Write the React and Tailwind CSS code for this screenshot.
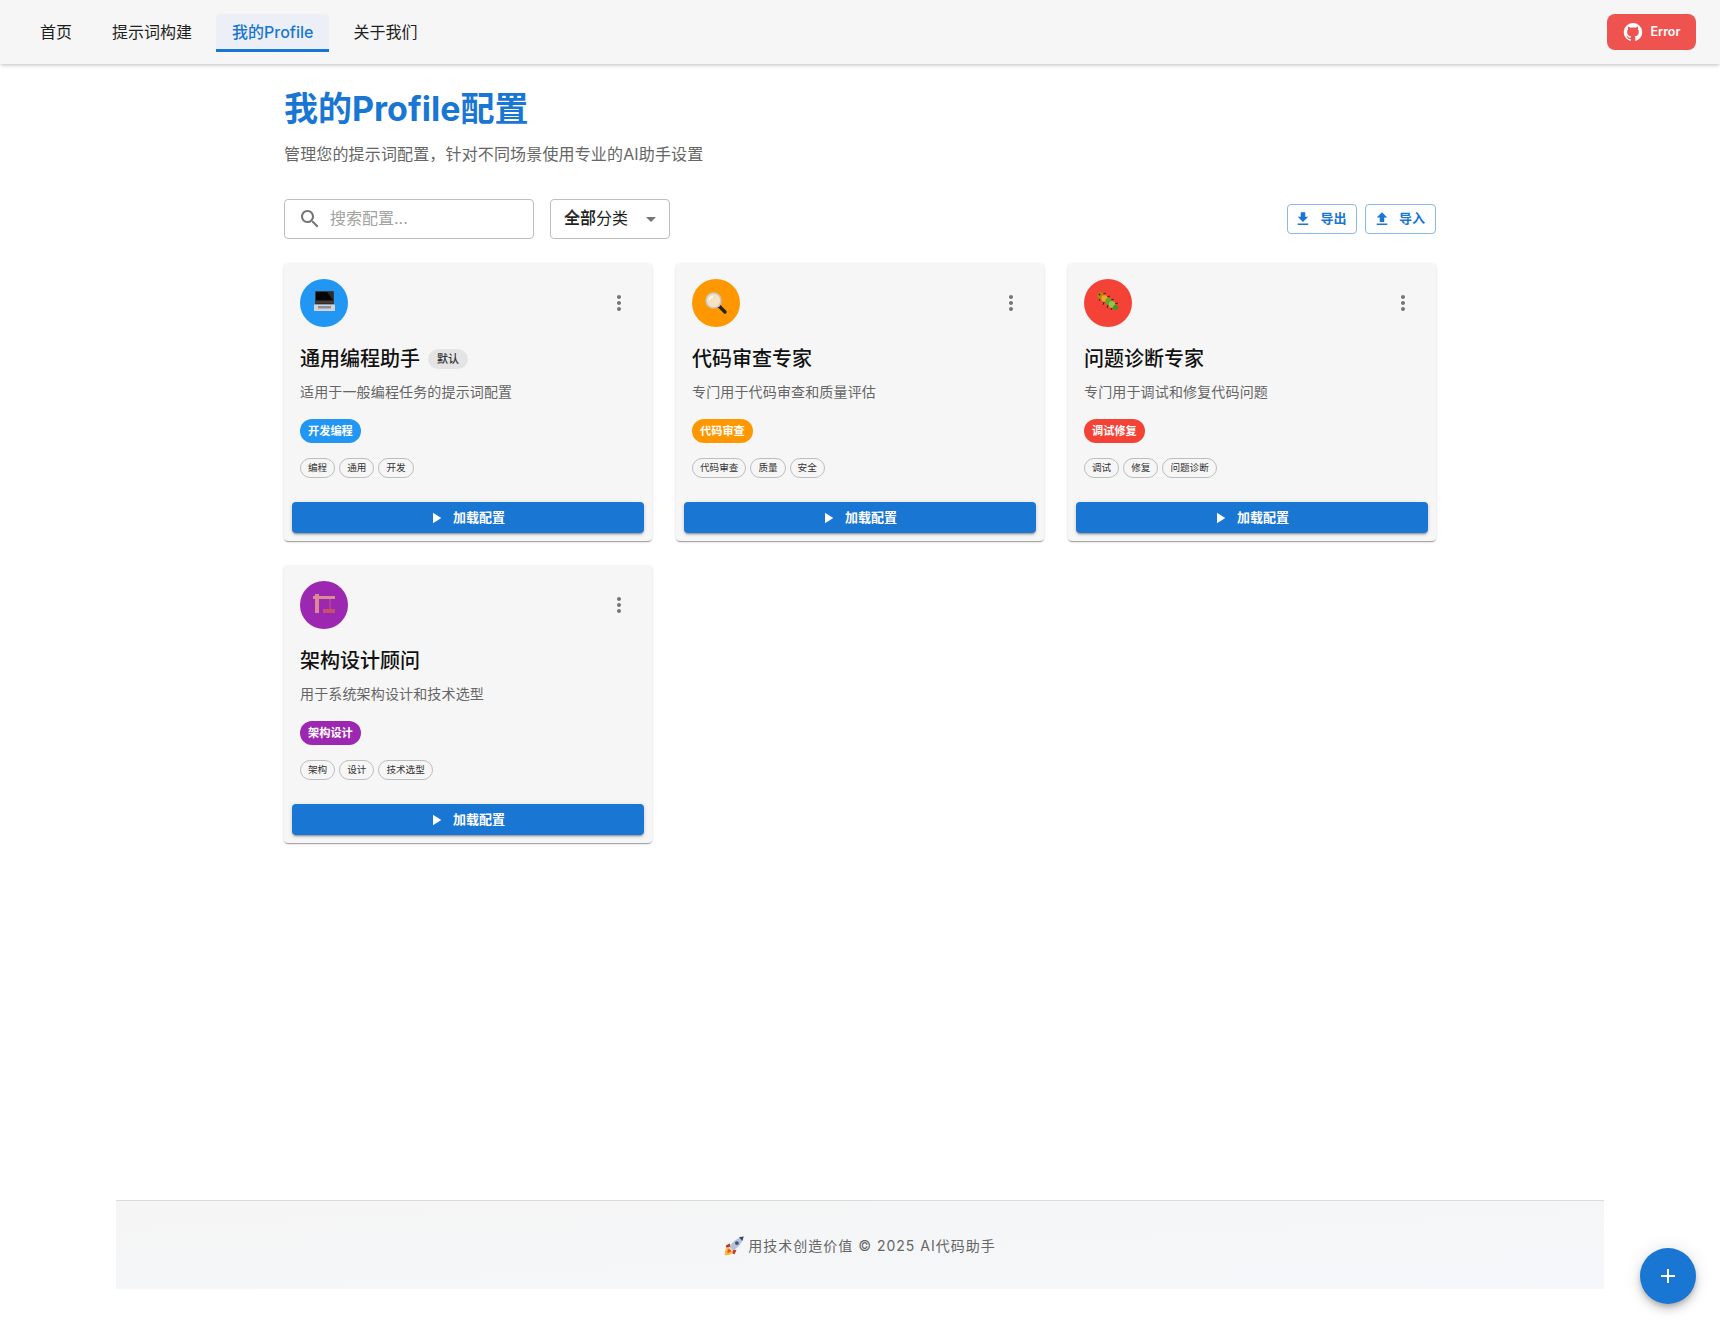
import React from 'react';

const navItems = ['首页', '提示词构建', '我的Profile', '关于我们'];

const profiles = [
  {
    title: '通用编程助手',
    desc: '适用于一般编程任务的提示词配置',
    category: '开发编程',
    tags: ['编程', '通用', '开发'],
    avatarClass: 'bg-[#2196f3]',
    chipClass: 'bg-[#2196f3]',
    emoji: 'laptop',
    isDefault: true,
  },
  {
    title: '代码审查专家',
    desc: '专门用于代码审查和质量评估',
    category: '代码审查',
    tags: ['代码审查', '质量', '安全'],
    avatarClass: 'bg-[#ff9800]',
    chipClass: 'bg-[#ff9800]',
    emoji: 'search',
  },
  {
    title: '问题诊断专家',
    desc: '专门用于调试和修复代码问题',
    category: '调试修复',
    tags: ['调试', '修复', '问题诊断'],
    avatarClass: 'bg-[#f44336]',
    chipClass: 'bg-[#f44336]',
    emoji: 'bug',
  },
  {
    title: '架构设计顾问',
    desc: '用于系统架构设计和技术选型',
    category: '架构设计',
    tags: ['架构', '设计', '技术选型'],
    avatarClass: 'bg-[#9c27b0]',
    chipClass: 'bg-[#9c27b0]',
    emoji: 'crane',
  },
];

function Icon({ d, className }) {
  return (
    <svg viewBox="0 0 24 24" fill="currentColor" className={className}>
      <path d={d} />
    </svg>
  );
}

// emoji are drawn since there is no colour emoji font
function Emoji({ name }) {
  if (name === 'laptop') {
    return (
      <svg viewBox="0 0 24 24" className="w-6 h-6">
        <rect x="3" y="0" width="19" height="13.5" rx="1" fill="#3a3a3c" />
        <rect x="4" y="1" width="17" height="11.5" fill="#060608" />
        <path d="M15 1h6v8z" fill="#2e2b2a" />
        <path d="M4 9.5h17v3H4z" fill="#4a3a30" />
        <path d="M2 13.5h21V20H2z" fill="#d2d4d8" />
        <path d="M6 15h13v2.5H6z" fill="#8e9095" />
      </svg>
    );
  }
  if (name === 'search') {
    return (
      <svg viewBox="0 0 24 24" className="w-6 h-6">
        <path d="M14 14l7 7" stroke="#222" strokeWidth="3.4" strokeLinecap="round" />
        <path d="M13.5 13.5l2 2" stroke="#a9a9a9" strokeWidth="2.4" />
        <circle cx="9.5" cy="9.5" r="7.5" fill="#f3e3c2" stroke="#c9c6bf" strokeWidth="1.6" />
        <path d="M5.5 9a4 4 0 0 1 3.5-3.5" stroke="#fff" strokeWidth="1.4" fill="none" />
      </svg>
    );
  }
  if (name === 'bug') {
    return (
      <svg viewBox="0 0 24 24" className="w-6 h-6">
        <g stroke="#3b2a12" strokeWidth="1">
          <path d="M4 8l-1 2M8 11l-1 3M12 14l-1 3M16 17l-1 2M7 3l3-1M11 6l3-1M15 9l3-1M19 13l3-1" />
        </g>
        <circle cx="4.5" cy="4.5" r="3.2" fill="#b8860b" />
        <circle cx="8.5" cy="7.5" r="3.2" fill="#e0ac20" />
        <circle cx="12.5" cy="10.5" r="3.2" fill="#5fa82c" />
        <circle cx="16" cy="13.5" r="3.2" fill="#8ccb4a" />
        <circle cx="19.5" cy="16.5" r="2.6" fill="#4c8f24" />
        <circle cx="3.5" cy="3.5" r="1" fill="#3b2a12" />
      </svg>
    );
  }
  if (name === 'crane') {
    return (
      <svg viewBox="0 0 24 24" className="w-6 h-6">
        <path d="M3 1h4v19H3z" fill="#db8a94" />
        <path d="M1 3h22v3H1z" fill="#db8a94" />
        <path d="M17.5 6h1v10h-1z" fill="#b5607a" />
        <path d="M11 16h12v4H11z" fill="#c4506a" />
      </svg>
    );
  }
  return null;
}

function Rocket() {
  return (
    <svg viewBox="0 0 24 24" className="w-5 h-5 shrink-0">
      <path d="M1 23c-.5-5 1-8.500 4-9.500l5.500 5.500C9.500 22 6 23.500 1 23z" fill="#f7b93e" />
      <path d="M4 20c0-2.500.8-4 2.400-4.600l2.200 2.200C8 19.200 6.500 20 4 20z" fill="#e8562a" />
      <path d="M7 9L2 11.500l1 2.500 5-1zM15 17l-2.500 5-2.500-1 1-5z" fill="#c0392b" />
      <path d="M6.500 13.500C10 6.500 16 2 23.500.5 22 8 17.500 14 10.500 17.500z" fill="#b7c2d3" />
      <path d="M18 1.500L23.500.5c-.3 1.900-.8 3.700-1.500 5.400z" fill="#34466b" />
      <circle cx="15.500" cy="8.500" r="2.300" fill="#34568f" />
    </svg>
  );
}

function ProfileCard({ profile }) {
  return (
    <div className="h-[278px] flex flex-col bg-[#f6f6f6] rounded shadow-[0_2px_1px_-1px_rgba(0,0,0,0.2),0_1px_1px_0_rgba(0,0,0,0.14),0_1px_3px_0_rgba(0,0,0,0.12)]">
      <div className="flex-1 p-4">
        <div className="flex items-center justify-between">
          <div className={`w-12 h-12 rounded-full flex items-center justify-center ${profile.avatarClass}`}>
            <Emoji name={profile.emoji} />
          </div>
          <div className="w-10 h-10 mr-[-3px] flex items-center justify-center text-[#757575]">
            <Icon d="M12 8c1.1 0 2-.9 2-2s-.9-2-2-2-2 .9-2 2 .9 2 2 2zm0 2c-1.1 0-2 .9-2 2s.9 2 2 2 2-.9 2-2-.9-2-2-2zm0 6c-1.1 0-2 .9-2 2s.9 2 2 2 2-.9 2-2-.9-2-2-2z" className="w-6 h-6" />
          </div>
        </div>
        <div className="mt-4 flex items-center h-8">
          <h3 className="text-[20px] leading-8 font-medium text-[#111]">{profile.title}</h3>
          {profile.isDefault && (
            <span className="ml-2 h-5 px-[9px] rounded-full bg-[#e4e4e4] text-[11px] leading-5 text-[#333] font-medium">默认</span>
          )}
        </div>
        <p className="mt-[7px] text-sm leading-5 tracking-[0.15px] text-[#666]">{profile.desc}</p>
        <div className="mt-[17px] flex">
          <span className={`h-6 px-2 rounded-full text-[11.2px] leading-6 font-semibold text-white ${profile.chipClass}`}>{profile.category}</span>
        </div>
        <div className="mt-[15px] flex gap-1">
          {profile.tags.map(tag => (
            <span key={tag} className="h-5 px-[7px] rounded-full border border-[#bdbdbd] text-[9.6px] leading-[18px] text-[#333]">{tag}</span>
          ))}
        </div>
      </div>
      <div className="px-2 pb-2">
        <button className="w-full h-[31px] pr-1 flex items-center justify-center gap-2 rounded bg-[#1976d2] text-white text-[13px] font-semibold shadow-[0_3px_1px_-2px_rgba(0,0,0,0.2),0_2px_2px_0_rgba(0,0,0,0.14),0_1px_5px_0_rgba(0,0,0,0.12)]">
          <Icon d="M8 5v14l11-7z" className="w-[18px] h-[18px]" />
          加载配置
        </button>
      </div>
    </div>
  );
}

export default function App() {
  return (
    <div className="min-h-screen flex flex-col bg-white font-['Inter','Noto_Sans_CJK_SC',sans-serif]">
      <nav className="h-16 shrink-0 flex items-center justify-between pl-6 pr-6 bg-[#f6f6f7] shadow-[0_2px_4px_-1px_rgba(0,0,0,0.2),0_1px_4px_0_rgba(0,0,0,0.08)]">
        <div className="flex gap-2">
          {navItems.map(item => (
            <button
              key={item}
              className={item === '我的Profile'
                ? 'h-[38px] px-4 pt-[2px] mt-[1px] rounded-t bg-[#ecf0f6] border-b-[3px] border-[#1976d2] text-[#1976d2] text-base font-medium'
                : 'h-[38px] px-4 pt-[2px] mt-[1px] text-base text-[#1f1f1f] border-b-[3px] border-transparent'}
            >
              {item}
            </button>
          ))}
        </div>
        <button className="w-[89px] h-9 flex items-center justify-center gap-2 rounded-lg bg-[#ef5350] text-white text-[12.5px] font-semibold">
          <Icon d="M12 1.27a11 11 0 00-3.48 21.46c.55.09.73-.28.73-.55v-1.84c-3.03.64-3.67-1.46-3.67-1.46-.55-1.29-1.28-1.65-1.28-1.65-.92-.65.1-.65.1-.65 1.1 0 1.73 1.1 1.73 1.1.92 1.65 2.57 1.2 3.21.92a2 2 0 01.64-1.47c-2.47-.27-5.04-1.19-5.04-5.5 0-1.1.46-2.1 1.2-2.84a3.76 3.76 0 010-2.93s.91-.28 3.11 1.1c1.8-.49 3.7-.49 5.5 0 2.1-1.38 3.02-1.1 3.02-1.1a3.76 3.76 0 010 2.93c.83.74 1.2 1.74 1.2 2.94 0 4.21-2.57 5.13-5.04 5.4.45.37.82.92.82 2.02v3.03c0 .27.1.64.73.55A11 11 0 0012 1.27" className="w-5 h-5" />
          Error
        </button>
      </nav>

      <main className="w-[1152px] mx-auto pt-[25px] flex-1">
        <h1 className="text-[34px] leading-10 font-bold text-[#1976d2]">我的Profile配置</h1>
        <p className="mt-[13px] text-base leading-6 tracking-[0.15px] text-[#666]">管理您的提示词配置，针对不同场景使用专业的AI助手设置</p>

        <div className="mt-[33px] flex items-center justify-between">
          <div className="flex gap-4">
            <div className="w-[250px] h-10 flex items-center gap-2 pl-[13px] pr-4 rounded border border-[#bdbdbd]">
              <Icon d="M15.5 14h-.79l-.28-.27C15.41 12.59 16 11.11 16 9.5 16 5.91 13.09 3 9.5 3S3 5.91 3 9.5 5.91 16 9.5 16c1.61 0 3.09-.59 4.23-1.57l.27.28v.79l5 4.99L20.49 19l-4.99-5zm-6 0C7.01 14 5 11.99 5 9.5S7.01 5 9.5 5 14 7.01 14 9.5 11.99 14 9.5 14z" className="w-6 h-6 text-[#757575] shrink-0" />
              <span className="pb-[2px] text-base text-[#a2a2a2]">搜索配置...</span>
            </div>
            <div className="w-[120px] h-10 flex items-center justify-between pl-[13px] pr-[6px] rounded border border-[#bdbdbd]">
              <span className="pb-[2px] text-base text-[#1f1f1f]">
                <span className="[text-shadow:0_-1.5px_0_#555]">全部</span>分类
              </span>
              <Icon d="M7 10l5 5 5-5z" className="w-6 h-6 text-[#757575]" />
            </div>
          </div>
          <div className="flex gap-2">
            <button className="w-[70px] h-[30px] pr-[3px] flex items-center justify-center gap-2 rounded border border-[#8bb9e6] text-[#1976d2] text-[13px] font-semibold">
              <Icon d="M19 9h-4V3H9v6H5l7 7 7-7zM5 18v2h14v-2H5z" className="w-[18px] h-[18px]" />
              导出
            </button>
            <button className="w-[71px] h-[30px] pr-[3px] flex items-center justify-center gap-2 rounded border border-[#8bb9e6] text-[#1976d2] text-[13px] font-semibold">
              <Icon d="M9 16h6v-6h4l-7-7-7 7h4zm-4 2h14v2H5z" className="w-[18px] h-[18px]" />
              导入
            </button>
          </div>
        </div>

        <div className="mt-6 grid grid-cols-3 gap-6">
          {profiles.map(profile => (
            <ProfileCard key={profile.title} profile={profile} />
          ))}
        </div>
      </main>

      <footer className="w-[1488px] h-[89px] mx-auto mb-[39px] pt-[2px] shrink-0 flex items-center justify-center gap-1 border-t border-[#dcdcdc] bg-gradient-to-br from-[#f5f5f5] to-[#f5f7fa] text-sm tracking-[1px] text-[#666]">
        <Rocket />
        <span>用技术创造价值 © 2025 AI代码助手</span>
      </footer>

      <button className="fixed right-6 bottom-6 w-14 h-14 rounded-full flex items-center justify-center bg-[#1976d2] text-white shadow-[0_3px_5px_-1px_rgba(0,0,0,0.2),0_6px_10px_0_rgba(0,0,0,0.14),0_1px_18px_0_rgba(0,0,0,0.12)]">
        <Icon d="M19 13h-6v6h-2v-6H5v-2h6V5h2v6h6v2z" className="w-6 h-6" />
      </button>
    </div>
  );
}
